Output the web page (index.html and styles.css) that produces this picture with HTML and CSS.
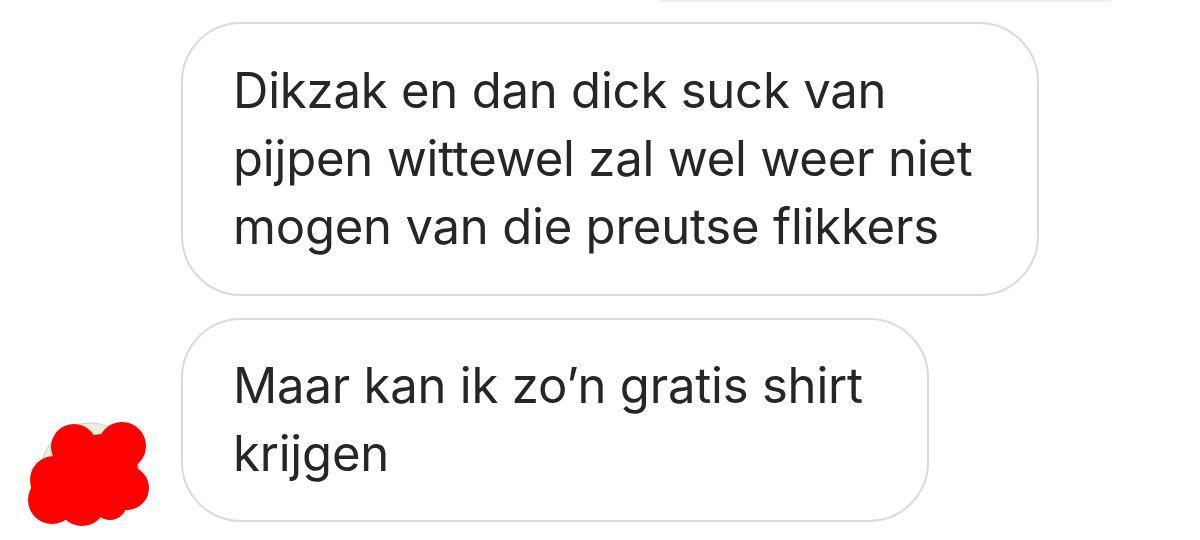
FILE: index.html
```html
<!DOCTYPE html>
<html lang="nl">
<head>
  <meta charset="UTF-8" />
  <meta name="viewport" content="width=device-width, initial-scale=1.0" />
  <title>Berichten</title>
  <link rel="stylesheet" href="styles.css">
</head>
<body>
  <div class="chat">
    <div class="bubble own"></div>

    <div class="row first">
      <div class="bubble">Dikzak en dan dick suck van<br>pijpen wittewel zal wel weer niet<br>mogen van die preutse flikkers</div>
    </div>

    <div class="row last">
      <svg class="avatar" viewBox="20 402 140 120" width="140" height="120">
        <circle cx="90" cy="472" r="49" fill="#efedde" stroke="#cfcfcf" stroke-width="1"/>
        <g fill="#ff0000">
          <circle cx="74" cy="447" r="23"/>
          <circle cx="122" cy="446" r="24"/>
          <circle cx="127" cy="488" r="22"/>
          <circle cx="54" cy="480" r="24"/>
          <circle cx="52" cy="500" r="24"/>
          <circle cx="82" cy="502" r="24"/>
          <circle cx="102" cy="470" r="36"/>
          <circle cx="110" cy="503" r="17"/>
        </g>
      </svg>
      <div class="bubble">Maar kan ik zo’n gratis shirt<br>krijgen</div>
    </div>
  </div>
</body>
</html>
```

FILE: styles.css
```css
body {
  margin: 0;
  background: #fff;
  font-family: Inter, "Noto Sans", sans-serif;
  color: #262626;
}
.chat {
  height: 540px;
  overflow: hidden;
  display: flex;
  flex-direction: column;
  justify-content: flex-end;
  padding-bottom: 18px;
  box-sizing: border-box;
}
.row {
  display: flex;
  align-items: flex-end;
  padding-left: 181px;
}
.row.first {
  margin-top: 20px;
}
.row.first .bubble {
  padding-top: 33px;
  padding-bottom: 33px;
}
.row.last {
  margin-top: 22px;
  padding-left: 20px;
}
.avatar {
  flex: none;
  overflow: visible;
  margin-right: 21px;
}
.bubble {
  width: fit-content;
  border: 2px solid #dbdbdb;
  border-radius: 60px;
  padding: 32px 64px 32px 50px;
  font-size: 49px;
  line-height: 68px;
  letter-spacing: -0.2px;
  white-space: nowrap;
}
.bubble.own {
  align-self: flex-end;
  margin-right: 89px;
  width: 451px;
  height: 120px;
  padding: 0;
  border: none;
  box-sizing: border-box;
  background: #efefef;
}
```
